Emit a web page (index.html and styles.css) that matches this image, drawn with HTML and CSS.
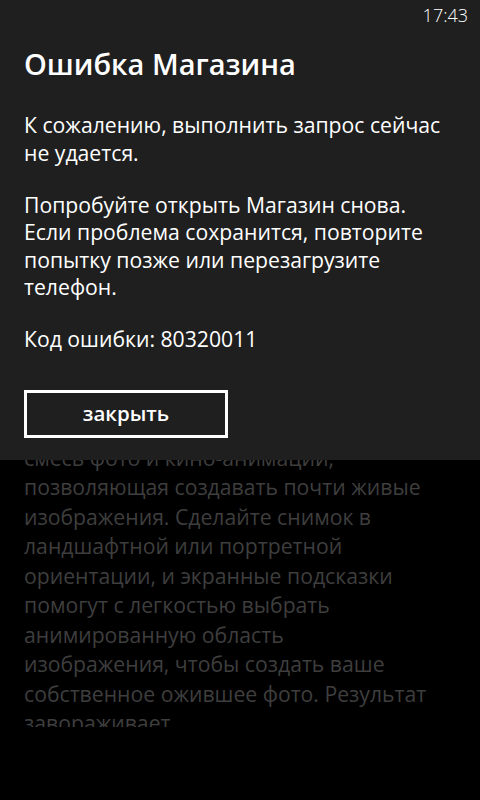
FILE: index.html
```html
<!DOCTYPE html>
<html lang="ru">
<head>
    <meta charset="UTF-8">
    <meta name="viewport" content="width=device-width, initial-scale=1.0">
    <title>Ошибка Магазина</title>
    <link rel="stylesheet" href="styles.css">
</head>
<body>
    <div class="screen">
        <div class="app-page">
            <p class="description">Cinemagraph — это уникальная<br>
                смесь фото и кино-анимации,<br>
                позволяющая создавать почти живые<br>
                изображения. Сделайте снимок в<br>
                ландшафтной или портретной<br>
                ориентации, и экранные подсказки<br>
                помогут с легкостью выбрать<br>
                анимированную область<br>
                изображения, чтобы создать ваше<br>
                собственное ожившее фото. Результат<br>
                завораживает.</p>
        </div>

        <div class="message-box">
            <div class="status-bar">
                <span class="clock">17:43</span>
            </div>
            <h1 class="title">Ошибка Магазина</h1>
            <p class="message">К сожалению, выполнить запрос сейчас не удается.</p>
            <p class="message">Попробуйте открыть Магазин снова.<br>Если проблема сохранится, повторите попытку позже или перезагрузите телефон.</p>
            <p class="message">Код ошибки: 80320011</p>
            <button class="close-button">закрыть</button>
        </div>
    </div>
</body>
</html>
```

FILE: styles.css
```css
body {
    margin: 0;
    background-color: #000;
    font-family: "Open Sans", "Noto Sans", sans-serif;
    color: #fff;
}
.screen {
    position: relative;
    width: 480px;
    height: 800px;
    overflow: hidden;
}
.app-page {
    padding: 413px 24px 0;
}
.description {
    margin: 0;
    height: 314px;
    overflow: hidden;
    font-size: 21.2px;
    line-height: 29.5px;
    color: #3e3e3e;
    white-space: nowrap;
}
.message-box {
    position: absolute;
    top: 0;
    left: 0;
    right: 0;
    height: 460px;
    background-color: #1f1f1f;
    padding: 0 24px;
    box-sizing: border-box;
}
.status-bar {
    display: flex;
    justify-content: flex-end;
    height: 32px;
    margin-right: -12px;
}
.clock {
    font-size: 18px;
    line-height: 30px;
    font-weight: 300;
}
.title {
    margin: 12px 0 27px;
    font-size: 29px;
    font-weight: 600;
    line-height: 40px;
}
.message {
    margin: 0 0 24.5px;
    font-size: 21.2px;
    line-height: 27.5px;
}
.close-button {
    display: block;
    margin-top: 37px;
    width: 204px;
    height: 48px;
    background: transparent;
    border: 3px solid #fff;
    color: #fff;
    font-family: inherit;
    font-size: 20.5px;
    font-weight: 600;
    padding: 0 0 2px;
}
```
